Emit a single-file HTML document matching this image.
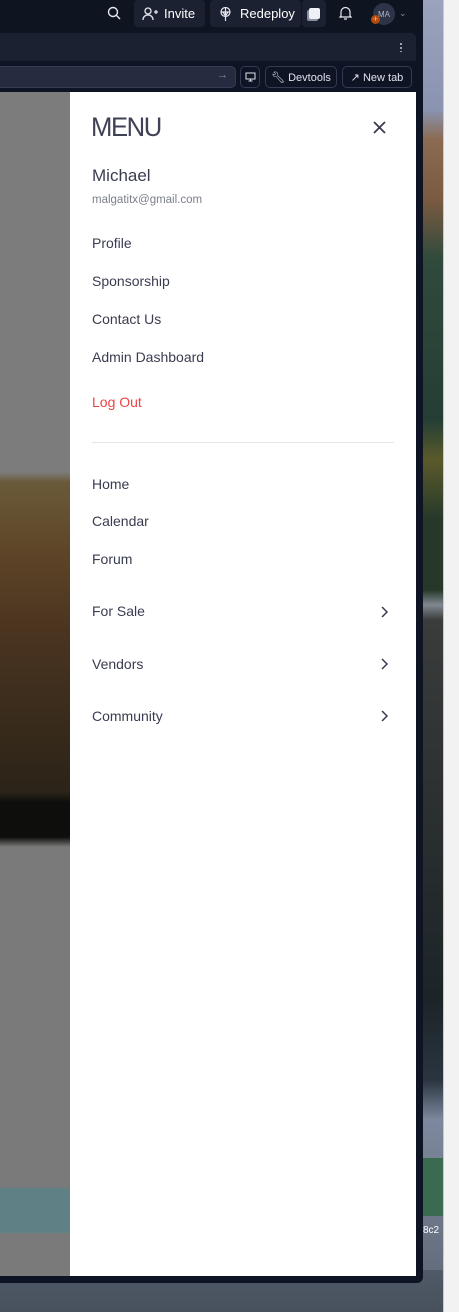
<!DOCTYPE html>
<html><head><meta charset="utf-8"><style>
*{margin:0;padding:0;box-sizing:border-box}
body{width:459px;height:1312px;overflow:hidden;position:relative;background:#f2f2f2;font-family:"Liberation Sans",sans-serif}
.abs{position:absolute}
.top{left:0;top:0;width:423px;height:33px;background:#0f1421}
.btn{background:#1b2130;border-radius:4px;color:#fff;font-size:13px;height:27px;top:0;display:flex;align-items:center}
.frame{left:0;top:31px;width:423px;height:1252px;background:#0e1424;border-radius:0 0 6px 0}
.tabs{left:0;top:33px;width:416px;height:28px;background:#1b2130;border-radius:0 5px 0 0}
.addr{left:0;top:66px;width:236px;height:22px;background:#262c40;border:1px solid #343b52;border-left:none;border-radius:0 5px 5px 0}
.pill{top:66px;height:22px;border:1px solid #343b52;border-radius:5px;color:#dfe3ee;font-size:11px;display:flex;align-items:center;justify-content:center}
.left{left:0;top:92px;width:70px;height:1184px;background:linear-gradient(#7c7c7c 0,#7c7c7c 380px,#6a5a3a 390px,#5e4528 460px,#4a3420 540px,#2b2418 700px,#0e0f0c 710px,#0e0f0c 745px,#7a7a7a 755px,#7a7a7a 1095px,#5f8186 1097px,#5f8186 1140px,#7a7a7a 1142px)}
.panel{left:70px;top:92px;width:346px;height:1184px;background:#fff;color:#3a3c50}
.it{position:absolute;left:22px;font-size:14px;color:#3a3c50}
.chev{position:absolute;left:308px;width:12px;height:12px}
.strip{left:423px;top:0;width:20px;height:1312px;background:linear-gradient(#9aa2bd 0,#8a93b0 110px,#8a6a50 140px,#7a5a40 200px,#2f4a3c 260px,#253e35 420px,#5a5a2a 460px,#26382a 520px,#26382a 590px,#808890 605px,#3a3c3c 620px,#2c3030 800px,#1c2428 1000px,#2a3540 1080px,#7d889e 1120px,#5e6674 1312px)}
.desk{left:0;top:1270px;width:443px;height:42px;background:linear-gradient(#505a68,#47505c)}
</style></head><body>
<div class="abs strip"></div>
<div class="abs desk"></div>
<div class="abs" style="left:443px;top:0;width:1px;height:1312px;background:#c9c9c9"></div>
<div class="abs top"></div>
<svg class="abs" style="left:107px;top:6px" width="14" height="14" viewBox="0 0 14 14" fill="none" stroke="#e6e8ef" stroke-width="1.4"><circle cx="6" cy="6" r="4.5"/><path d="M9.5 9.5L13 13"/></svg>
<div class="abs btn" style="left:134px;width:71px"><svg style="margin:0 6px 0 8px" width="16" height="14" viewBox="0 0 16 14" fill="none" stroke="#e6e8ef" stroke-width="1.3"><circle cx="6" cy="4" r="3"/><path d="M1 13c0-3 2-5 5-5s5 2 5 5M12 5h4M14 3v4"/></svg>Invite</div>
<div class="abs btn" style="left:210px;width:91px"><svg style="margin:0 8px 0 9px" width="13" height="14" viewBox="0 0 13 14" fill="none" stroke="#e6e8ef" stroke-width="1.2"><circle cx="6.5" cy="5" r="4.5"/><path d="M2 5h9M6.5 1v13M4 5l2.5 4 2.5-4"/></svg>Redeploy</div>
<div class="abs btn" style="left:302px;width:24px;justify-content:center"><div style="width:11px;height:11px;background:#eef0f5;border-radius:2px;box-shadow:-2px 2px 0 #8a90a0"></div></div>
<svg class="abs" style="left:339px;top:6px" width="13" height="14" viewBox="0 0 13 14" fill="none" stroke="#e6e8ef" stroke-width="1.2"><path d="M2 10V6a4.5 4.5 0 019 0v4l1 1H1zM5 13h3"/></svg>
<div class="abs" style="left:373px;top:3px;width:22px;height:22px;border-radius:50%;background:#2d3447;color:#aeb4c4;font-size:8px;display:flex;align-items:center;justify-content:center">MA</div>
<div class="abs" style="left:371px;top:15px;width:9px;height:9px;border-radius:50%;background:#b34a0c;color:#ffb070;font-size:9px;line-height:9px;text-align:center">+</div>
<div class="abs" style="left:399px;top:8px;color:#8a90a0;font-size:9px">⌄</div>
<div class="abs frame"></div>
<div class="abs tabs"></div>
<div class="abs" style="left:400px;top:42px;width:2px;height:10px;background:radial-gradient(circle,#c8ccd6 1px,transparent 1px) 0 0/2px 4px"></div>
<div class="abs addr"><span style="position:absolute;right:7px;top:2px;color:#8a90a0;font-size:11px">→</span></div>
<div class="abs pill" style="left:240px;width:20px"><svg width="11" height="10" viewBox="0 0 11 10" fill="none" stroke="#dfe3ee" stroke-width="1"><rect x="1" y="1" width="9" height="6"/><path d="M5.5 7v2M3.5 9h4"/></svg></div>
<div class="abs pill" style="left:265px;width:72px">🔧︎&nbsp;Devtools</div>
<div class="abs pill" style="left:342px;width:70px">↗&nbsp;New tab</div>
<div class="abs left"></div>
<div class="abs panel">
 <div style="position:absolute;left:21px;top:21px;font-size:27px;letter-spacing:-1.5px;color:#3f4155;line-height:28px;transform:scaleX(0.95);transform-origin:left">MENU</div>
 <svg style="position:absolute;left:303px;top:29px" width="13" height="13" viewBox="0 0 13 13" stroke="#3a3c50" stroke-width="1.8"><path d="M1 1l11 11M12 1L1 12"/></svg>
 <div class="it" style="top:74px;font-size:17px">Michael</div>
 <div class="it" style="top:102px;font-size:11.5px;color:#7b7f8e">malgatitx@gmail.com</div>
 <div class="it" style="top:143px">Profile</div>
 <div class="it" style="top:181px">Sponsorship</div>
 <div class="it" style="top:219px">Contact Us</div>
 <div class="it" style="top:257px">Admin Dashboard</div>
 <div class="it" style="top:302px;color:#ef4444">Log Out</div>
 <div style="position:absolute;left:22px;top:350px;width:302px;height:1px;background:#e5e5e5"></div>
 <div class="it" style="top:384px">Home</div>
 <div class="it" style="top:421px">Calendar</div>
 <div class="it" style="top:459px">Forum</div>
 <div class="it" style="top:511px">For Sale</div>
 <div class="it" style="top:564px">Vendors</div>
 <div class="it" style="top:616px">Community</div>
 <svg class="chev" style="top:514px" viewBox="0 0 12 12" fill="none" stroke="#3a3c50" stroke-width="1.5"><path d="M4 1l5 5-5 5"/></svg>
 <svg class="chev" style="top:566px" viewBox="0 0 12 12" fill="none" stroke="#3a3c50" stroke-width="1.5"><path d="M4 1l5 5-5 5"/></svg>
 <svg class="chev" style="top:618px" viewBox="0 0 12 12" fill="none" stroke="#3a3c50" stroke-width="1.5"><path d="M4 1l5 5-5 5"/></svg>
</div>
<div class="abs" style="left:423px;top:1158px;width:20px;height:58px;background:#3a6a50"></div>
<div class="abs" style="left:423px;top:1225px;color:#fff;font-size:10px">8c2</div>
</body></html>
